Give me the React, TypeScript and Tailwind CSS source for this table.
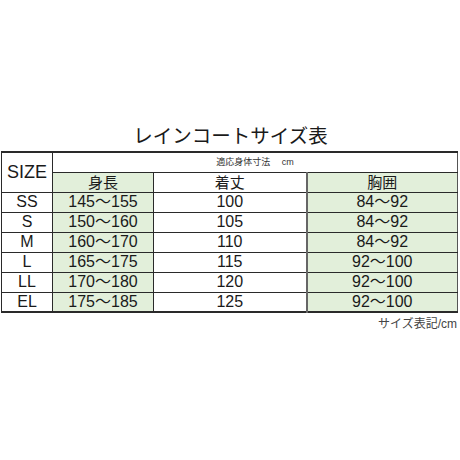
import React from 'react';

type Row = { size: string; height: string; length: string; chest: string };

const rows: Row[] = [
  { size: 'SS', height: '145～155', length: '100', chest: '84～92' },
  { size: 'S', height: '150～160', length: '105', chest: '84～92' },
  { size: 'M', height: '160～170', length: '110', chest: '84～92' },
  { size: 'L', height: '165～175', length: '115', chest: '92～100' },
  { size: 'LL', height: '170～180', length: '120', chest: '92～100' },
  { size: 'EL', height: '175～185', length: '125', chest: '92～100' },
];

const font = { fontFamily: '"Liberation Sans", "Noto Sans CJK JP", sans-serif' };

export default function App() {
  return (
    <div className="w-[460px] h-[460px] bg-white text-[#1a1a1a] pt-[121px]" style={font}>
      <h1 className="text-center text-[19.5px] leading-[30px] h-[30px] pl-px">レインコートサイズ表</h1>

      <table className="ml-px w-[456px] table-fixed border-collapse border-t-2 border-b-2 border-[#2a2a2a]">
        <colgroup>
          <col className="w-[51px]" />
          <col className="w-[101px]" />
          <col className="w-[153px]" />
          <col className="w-[151px]" />
        </colgroup>
        <thead>
          <tr className="h-[20px]">
            <th rowSpan={2} className="border border-[#2a2a2a] bg-white text-[18px] font-normal leading-none text-center">
              SIZE
            </th>
            <th colSpan={3} className="border border-[#2a2a2a] border-r-[#555] bg-white text-[9px] font-normal leading-none text-center text-[#333]">
              適応身体寸法　 cm
            </th>
          </tr>
          <tr className="h-[20px]">
            <th className="border border-[#2a2a2a] bg-[#e2efda] text-[15px] font-normal leading-none">身長</th>
            <th className="border border-[#2a2a2a] border-r-2 border-r-[#666] bg-white text-[15px] font-normal leading-none">着丈</th>
            <th className="border border-[#2a2a2a] border-r-[#555] bg-[#e2efda] text-[15px] font-normal leading-none">胸囲</th>
          </tr>
        </thead>
        <tbody>
          {rows.map((r) => (
            <tr key={r.size} className="h-[20px] text-[16px] leading-none text-center">
              <td className="border border-[#2a2a2a] bg-white">{r.size}</td>
              <td className="border border-[#2a2a2a] bg-[#e2efda]">{r.height}</td>
              <td className="border border-[#2a2a2a] border-r-2 border-r-[#666] bg-white">{r.length}</td>
              <td className="border border-[#2a2a2a] border-r-[#555] bg-[#e2efda]">{r.chest}</td>
            </tr>
          ))}
        </tbody>
      </table>

      <p className="w-[457px] text-right text-[12px] leading-[16px] pt-[3px] text-[#444]">サイズ表記/cm</p>
    </div>
  );
}
